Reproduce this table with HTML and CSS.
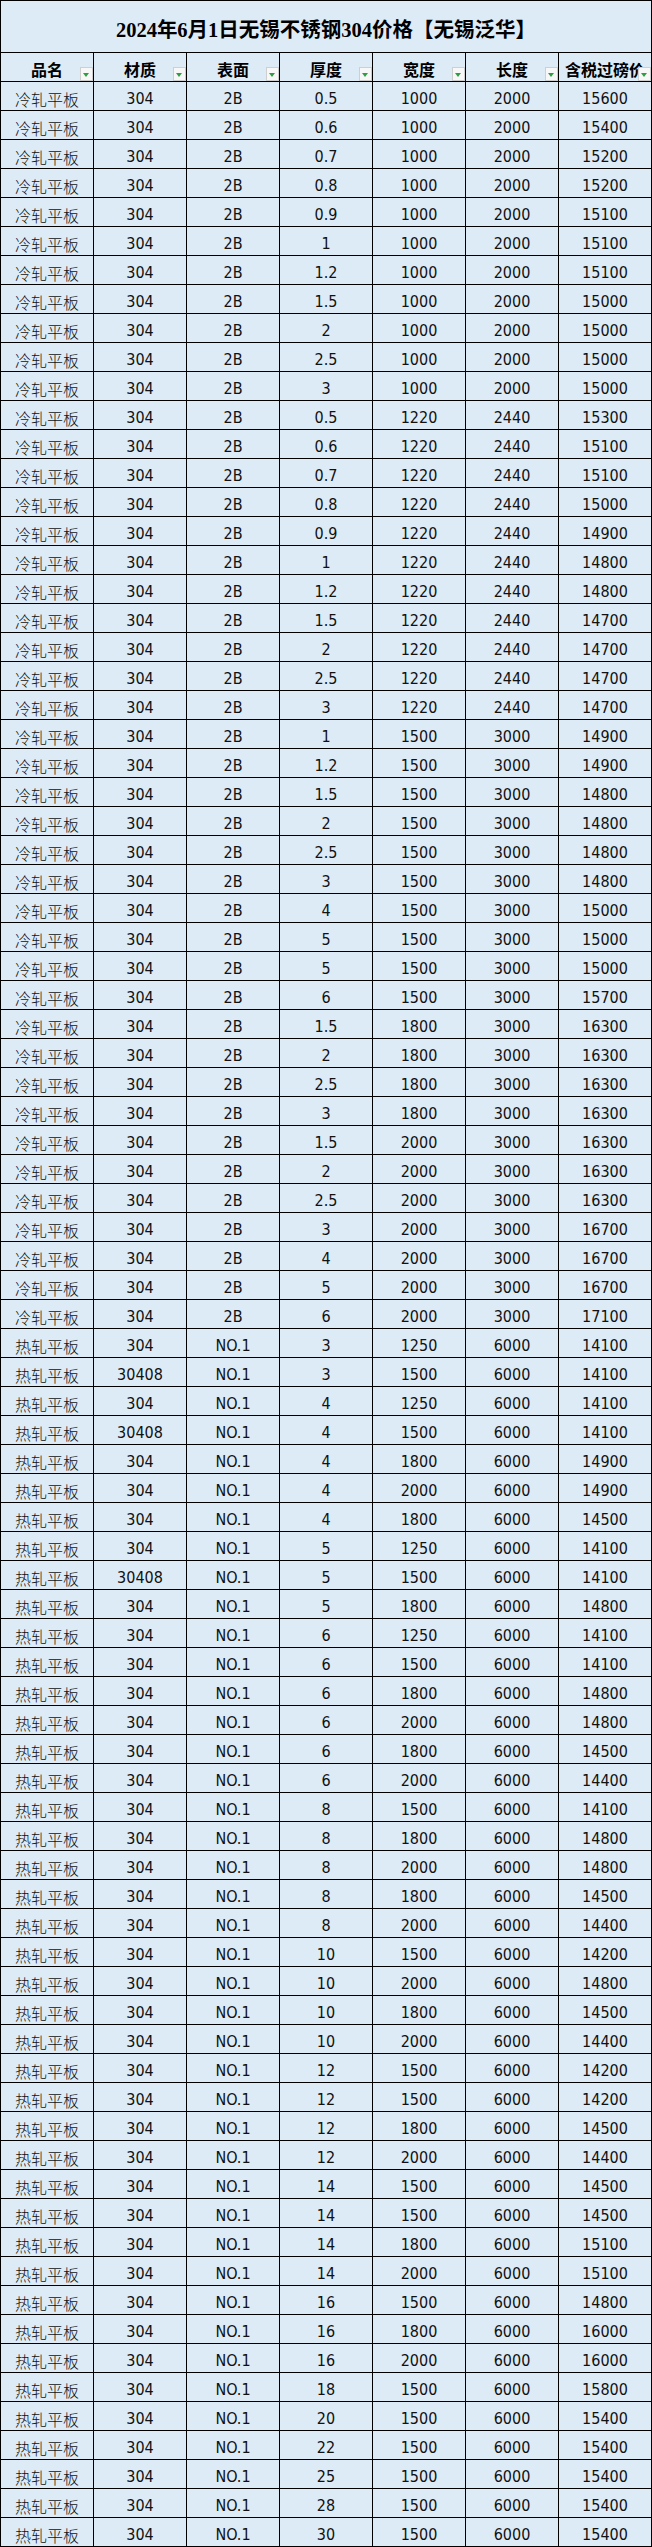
FILE: index.html
```html
<!DOCTYPE html>
<html lang="zh-CN">
<head>
<meta charset="utf-8">
<title>2024年6月1日无锡不锈钢304价格【无锡泛华】</title>
<link rel="stylesheet" href="styles.css">
</head>
<body>
<div class="sheet">
  <div class="title">2024年6月1日无锡不锈钢304价格【无锡泛华】</div>
  <div class="row head">
    <span>品名<b class="flt"></b></span><span>材质<b class="flt"></b></span><span>表面<b class="flt"></b></span><span>厚度<b class="flt"></b></span><span>宽度<b class="flt"></b></span><span>长度<b class="flt"></b></span><span>含税过磅价<b class="flt"></b></span>
  </div>
  <div class="row"><span>冷轧平板</span><span>304</span><span>2B</span><span>0.5</span><span>1000</span><span>2000</span><span>15600</span></div>
  <div class="row"><span>冷轧平板</span><span>304</span><span>2B</span><span>0.6</span><span>1000</span><span>2000</span><span>15400</span></div>
  <div class="row"><span>冷轧平板</span><span>304</span><span>2B</span><span>0.7</span><span>1000</span><span>2000</span><span>15200</span></div>
  <div class="row"><span>冷轧平板</span><span>304</span><span>2B</span><span>0.8</span><span>1000</span><span>2000</span><span>15200</span></div>
  <div class="row"><span>冷轧平板</span><span>304</span><span>2B</span><span>0.9</span><span>1000</span><span>2000</span><span>15100</span></div>
  <div class="row"><span>冷轧平板</span><span>304</span><span>2B</span><span>1</span><span>1000</span><span>2000</span><span>15100</span></div>
  <div class="row"><span>冷轧平板</span><span>304</span><span>2B</span><span>1.2</span><span>1000</span><span>2000</span><span>15100</span></div>
  <div class="row"><span>冷轧平板</span><span>304</span><span>2B</span><span>1.5</span><span>1000</span><span>2000</span><span>15000</span></div>
  <div class="row"><span>冷轧平板</span><span>304</span><span>2B</span><span>2</span><span>1000</span><span>2000</span><span>15000</span></div>
  <div class="row"><span>冷轧平板</span><span>304</span><span>2B</span><span>2.5</span><span>1000</span><span>2000</span><span>15000</span></div>
  <div class="row"><span>冷轧平板</span><span>304</span><span>2B</span><span>3</span><span>1000</span><span>2000</span><span>15000</span></div>
  <div class="row"><span>冷轧平板</span><span>304</span><span>2B</span><span>0.5</span><span>1220</span><span>2440</span><span>15300</span></div>
  <div class="row"><span>冷轧平板</span><span>304</span><span>2B</span><span>0.6</span><span>1220</span><span>2440</span><span>15100</span></div>
  <div class="row"><span>冷轧平板</span><span>304</span><span>2B</span><span>0.7</span><span>1220</span><span>2440</span><span>15100</span></div>
  <div class="row"><span>冷轧平板</span><span>304</span><span>2B</span><span>0.8</span><span>1220</span><span>2440</span><span>15000</span></div>
  <div class="row"><span>冷轧平板</span><span>304</span><span>2B</span><span>0.9</span><span>1220</span><span>2440</span><span>14900</span></div>
  <div class="row"><span>冷轧平板</span><span>304</span><span>2B</span><span>1</span><span>1220</span><span>2440</span><span>14800</span></div>
  <div class="row"><span>冷轧平板</span><span>304</span><span>2B</span><span>1.2</span><span>1220</span><span>2440</span><span>14800</span></div>
  <div class="row"><span>冷轧平板</span><span>304</span><span>2B</span><span>1.5</span><span>1220</span><span>2440</span><span>14700</span></div>
  <div class="row"><span>冷轧平板</span><span>304</span><span>2B</span><span>2</span><span>1220</span><span>2440</span><span>14700</span></div>
  <div class="row"><span>冷轧平板</span><span>304</span><span>2B</span><span>2.5</span><span>1220</span><span>2440</span><span>14700</span></div>
  <div class="row"><span>冷轧平板</span><span>304</span><span>2B</span><span>3</span><span>1220</span><span>2440</span><span>14700</span></div>
  <div class="row"><span>冷轧平板</span><span>304</span><span>2B</span><span>1</span><span>1500</span><span>3000</span><span>14900</span></div>
  <div class="row"><span>冷轧平板</span><span>304</span><span>2B</span><span>1.2</span><span>1500</span><span>3000</span><span>14900</span></div>
  <div class="row"><span>冷轧平板</span><span>304</span><span>2B</span><span>1.5</span><span>1500</span><span>3000</span><span>14800</span></div>
  <div class="row"><span>冷轧平板</span><span>304</span><span>2B</span><span>2</span><span>1500</span><span>3000</span><span>14800</span></div>
  <div class="row"><span>冷轧平板</span><span>304</span><span>2B</span><span>2.5</span><span>1500</span><span>3000</span><span>14800</span></div>
  <div class="row"><span>冷轧平板</span><span>304</span><span>2B</span><span>3</span><span>1500</span><span>3000</span><span>14800</span></div>
  <div class="row"><span>冷轧平板</span><span>304</span><span>2B</span><span>4</span><span>1500</span><span>3000</span><span>15000</span></div>
  <div class="row"><span>冷轧平板</span><span>304</span><span>2B</span><span>5</span><span>1500</span><span>3000</span><span>15000</span></div>
  <div class="row"><span>冷轧平板</span><span>304</span><span>2B</span><span>5</span><span>1500</span><span>3000</span><span>15000</span></div>
  <div class="row"><span>冷轧平板</span><span>304</span><span>2B</span><span>6</span><span>1500</span><span>3000</span><span>15700</span></div>
  <div class="row"><span>冷轧平板</span><span>304</span><span>2B</span><span>1.5</span><span>1800</span><span>3000</span><span>16300</span></div>
  <div class="row"><span>冷轧平板</span><span>304</span><span>2B</span><span>2</span><span>1800</span><span>3000</span><span>16300</span></div>
  <div class="row"><span>冷轧平板</span><span>304</span><span>2B</span><span>2.5</span><span>1800</span><span>3000</span><span>16300</span></div>
  <div class="row"><span>冷轧平板</span><span>304</span><span>2B</span><span>3</span><span>1800</span><span>3000</span><span>16300</span></div>
  <div class="row"><span>冷轧平板</span><span>304</span><span>2B</span><span>1.5</span><span>2000</span><span>3000</span><span>16300</span></div>
  <div class="row"><span>冷轧平板</span><span>304</span><span>2B</span><span>2</span><span>2000</span><span>3000</span><span>16300</span></div>
  <div class="row"><span>冷轧平板</span><span>304</span><span>2B</span><span>2.5</span><span>2000</span><span>3000</span><span>16300</span></div>
  <div class="row"><span>冷轧平板</span><span>304</span><span>2B</span><span>3</span><span>2000</span><span>3000</span><span>16700</span></div>
  <div class="row"><span>冷轧平板</span><span>304</span><span>2B</span><span>4</span><span>2000</span><span>3000</span><span>16700</span></div>
  <div class="row"><span>冷轧平板</span><span>304</span><span>2B</span><span>5</span><span>2000</span><span>3000</span><span>16700</span></div>
  <div class="row"><span>冷轧平板</span><span>304</span><span>2B</span><span>6</span><span>2000</span><span>3000</span><span>17100</span></div>
  <div class="row"><span>热轧平板</span><span>304</span><span>NO.1</span><span>3</span><span>1250</span><span>6000</span><span>14100</span></div>
  <div class="row"><span>热轧平板</span><span>30408</span><span>NO.1</span><span>3</span><span>1500</span><span>6000</span><span>14100</span></div>
  <div class="row"><span>热轧平板</span><span>304</span><span>NO.1</span><span>4</span><span>1250</span><span>6000</span><span>14100</span></div>
  <div class="row"><span>热轧平板</span><span>30408</span><span>NO.1</span><span>4</span><span>1500</span><span>6000</span><span>14100</span></div>
  <div class="row"><span>热轧平板</span><span>304</span><span>NO.1</span><span>4</span><span>1800</span><span>6000</span><span>14900</span></div>
  <div class="row"><span>热轧平板</span><span>304</span><span>NO.1</span><span>4</span><span>2000</span><span>6000</span><span>14900</span></div>
  <div class="row"><span>热轧平板</span><span>304</span><span>NO.1</span><span>4</span><span>1800</span><span>6000</span><span>14500</span></div>
  <div class="row"><span>热轧平板</span><span>304</span><span>NO.1</span><span>5</span><span>1250</span><span>6000</span><span>14100</span></div>
  <div class="row"><span>热轧平板</span><span>30408</span><span>NO.1</span><span>5</span><span>1500</span><span>6000</span><span>14100</span></div>
  <div class="row"><span>热轧平板</span><span>304</span><span>NO.1</span><span>5</span><span>1800</span><span>6000</span><span>14800</span></div>
  <div class="row"><span>热轧平板</span><span>304</span><span>NO.1</span><span>6</span><span>1250</span><span>6000</span><span>14100</span></div>
  <div class="row"><span>热轧平板</span><span>304</span><span>NO.1</span><span>6</span><span>1500</span><span>6000</span><span>14100</span></div>
  <div class="row"><span>热轧平板</span><span>304</span><span>NO.1</span><span>6</span><span>1800</span><span>6000</span><span>14800</span></div>
  <div class="row"><span>热轧平板</span><span>304</span><span>NO.1</span><span>6</span><span>2000</span><span>6000</span><span>14800</span></div>
  <div class="row"><span>热轧平板</span><span>304</span><span>NO.1</span><span>6</span><span>1800</span><span>6000</span><span>14500</span></div>
  <div class="row"><span>热轧平板</span><span>304</span><span>NO.1</span><span>6</span><span>2000</span><span>6000</span><span>14400</span></div>
  <div class="row"><span>热轧平板</span><span>304</span><span>NO.1</span><span>8</span><span>1500</span><span>6000</span><span>14100</span></div>
  <div class="row"><span>热轧平板</span><span>304</span><span>NO.1</span><span>8</span><span>1800</span><span>6000</span><span>14800</span></div>
  <div class="row"><span>热轧平板</span><span>304</span><span>NO.1</span><span>8</span><span>2000</span><span>6000</span><span>14800</span></div>
  <div class="row"><span>热轧平板</span><span>304</span><span>NO.1</span><span>8</span><span>1800</span><span>6000</span><span>14500</span></div>
  <div class="row"><span>热轧平板</span><span>304</span><span>NO.1</span><span>8</span><span>2000</span><span>6000</span><span>14400</span></div>
  <div class="row"><span>热轧平板</span><span>304</span><span>NO.1</span><span>10</span><span>1500</span><span>6000</span><span>14200</span></div>
  <div class="row"><span>热轧平板</span><span>304</span><span>NO.1</span><span>10</span><span>2000</span><span>6000</span><span>14800</span></div>
  <div class="row"><span>热轧平板</span><span>304</span><span>NO.1</span><span>10</span><span>1800</span><span>6000</span><span>14500</span></div>
  <div class="row"><span>热轧平板</span><span>304</span><span>NO.1</span><span>10</span><span>2000</span><span>6000</span><span>14400</span></div>
  <div class="row"><span>热轧平板</span><span>304</span><span>NO.1</span><span>12</span><span>1500</span><span>6000</span><span>14200</span></div>
  <div class="row"><span>热轧平板</span><span>304</span><span>NO.1</span><span>12</span><span>1500</span><span>6000</span><span>14200</span></div>
  <div class="row"><span>热轧平板</span><span>304</span><span>NO.1</span><span>12</span><span>1800</span><span>6000</span><span>14500</span></div>
  <div class="row"><span>热轧平板</span><span>304</span><span>NO.1</span><span>12</span><span>2000</span><span>6000</span><span>14400</span></div>
  <div class="row"><span>热轧平板</span><span>304</span><span>NO.1</span><span>14</span><span>1500</span><span>6000</span><span>14500</span></div>
  <div class="row"><span>热轧平板</span><span>304</span><span>NO.1</span><span>14</span><span>1500</span><span>6000</span><span>14500</span></div>
  <div class="row"><span>热轧平板</span><span>304</span><span>NO.1</span><span>14</span><span>1800</span><span>6000</span><span>15100</span></div>
  <div class="row"><span>热轧平板</span><span>304</span><span>NO.1</span><span>14</span><span>2000</span><span>6000</span><span>15100</span></div>
  <div class="row"><span>热轧平板</span><span>304</span><span>NO.1</span><span>16</span><span>1500</span><span>6000</span><span>14800</span></div>
  <div class="row"><span>热轧平板</span><span>304</span><span>NO.1</span><span>16</span><span>1800</span><span>6000</span><span>16000</span></div>
  <div class="row"><span>热轧平板</span><span>304</span><span>NO.1</span><span>16</span><span>2000</span><span>6000</span><span>16000</span></div>
  <div class="row"><span>热轧平板</span><span>304</span><span>NO.1</span><span>18</span><span>1500</span><span>6000</span><span>15800</span></div>
  <div class="row"><span>热轧平板</span><span>304</span><span>NO.1</span><span>20</span><span>1500</span><span>6000</span><span>15400</span></div>
  <div class="row"><span>热轧平板</span><span>304</span><span>NO.1</span><span>22</span><span>1500</span><span>6000</span><span>15400</span></div>
  <div class="row"><span>热轧平板</span><span>304</span><span>NO.1</span><span>25</span><span>1500</span><span>6000</span><span>15400</span></div>
  <div class="row"><span>热轧平板</span><span>304</span><span>NO.1</span><span>28</span><span>1500</span><span>6000</span><span>15400</span></div>
  <div class="row"><span>热轧平板</span><span>304</span><span>NO.1</span><span>30</span><span>1500</span><span>6000</span><span>15400</span></div>
</div>
</body>
</html>
```

FILE: styles.css
```css
html, body {
  margin: 0;
  padding: 0;
  background: #ffffff;
}

.sheet {
  width: 652px;
  box-sizing: border-box;
  border: 1px solid #000;
  background: #000;
  display: flex;
  flex-direction: column;
  gap: 1px;
}

.title {
  height: 51px;
  background: #ddebf7;
  display: flex;
  align-items: center;
  justify-content: center;
  padding-top: 3px;
  box-sizing: border-box;
  font-family: "Liberation Serif", "Noto Sans CJK SC", serif;
  font-weight: bold;
  font-size: 20.5px;
  color: #000;
}

.row {
  display: grid;
  grid-template-columns: repeat(7, 92px);
  gap: 1px;
  height: 28px;
}

.row span {
  position: relative;
  background: #ddebf7;
  display: flex;
  align-items: center;
  justify-content: center;
  padding-top: 5px;
  box-sizing: border-box;
  font-family: "Liberation Sans Narrow", "DejaVu Sans Condensed", "Liberation Sans", "Noto Sans CJK SC", sans-serif;
  font-weight: 300;
  font-size: 16px;
  color: #111;
  white-space: nowrap;
  overflow: hidden;
}

.row.head span {
  font-family: "Noto Sans CJK SC", sans-serif;
  font-weight: bold;
  font-size: 16px;
  color: #000;
  padding-top: 4px;
}

.flt {
  position: absolute;
  right: 0;
  bottom: 0;
  width: 13px;
  height: 14px;
  box-sizing: border-box;
  background: #f7f7f7;
  border: 1px solid #cfcfcf;
}

.flt::after {
  content: "";
  position: absolute;
  left: 2px;
  top: 5px;
  width: 0;
  height: 0;
  border-left: 3.5px solid transparent;
  border-right: 3.5px solid transparent;
  border-top: 4px solid #2e9e44;
}
```
